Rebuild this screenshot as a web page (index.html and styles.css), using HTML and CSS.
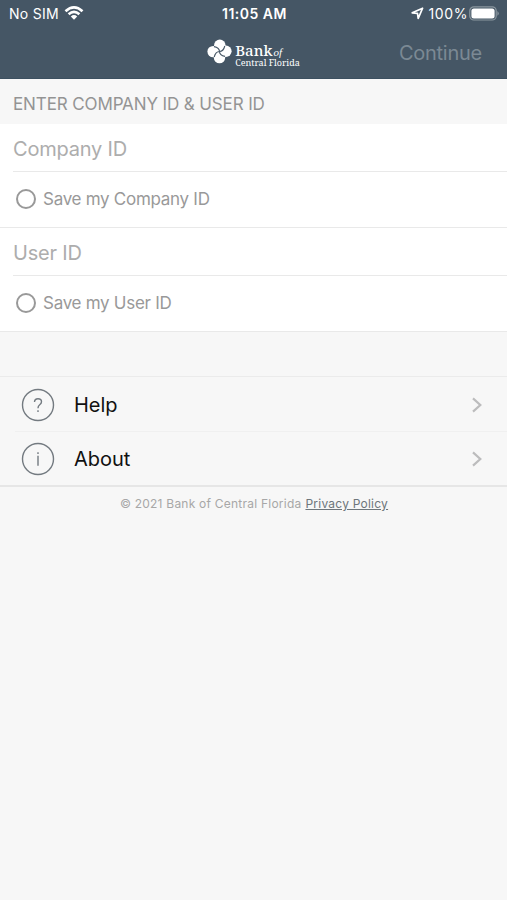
FILE: index.html
```html
<!DOCTYPE html>
<html lang="en">
<head>
<meta charset="utf-8">
<title>Bank of Central Florida</title>
<link rel="stylesheet" href="styles.css">
</head>
<body>
<header class="header">
  <div class="status">
    <div class="carrier"><span class="sim">No SIM</span>
      <svg class="wifi" width="20" height="16" viewBox="0 0 20 16" fill="none" stroke="#fff" stroke-width="2.6"><path d="M1.5 6.2Q10-1.6 18.5 6.2M4.6 9.3Q10 4.4 15.4 9.3"/><path d="M6.8 11.4Q10 8.8 13.2 11.4L10 14.8Z" fill="#fff" stroke="none"/></svg>
    </div>
    <div class="clock">11:05 AM</div>
    <div class="power">
      <svg width="13" height="13" viewBox="0 0 13 13" fill="none" stroke="#fff" stroke-width="1.7" stroke-linejoin="round"><path d="M11.6 1.2L1.2 5.8L6.5 6.4L7.2 11.5Z"/></svg>
      <span class="percent">100%</span>
      <svg width="31" height="15" viewBox="0 0 31 15"><rect x=".8" y=".8" width="26.4" height="13.2" rx="4" fill="none" stroke="#8b979f" stroke-width="1.2"/><rect x="2.4" y="2.4" width="23.2" height="10" rx="2.5" fill="#fff"/><path d="M28.4 5Q31.2 7.4 28.4 9.8Z" fill="#8b979f"/></svg>
    </div>
  </div>
  <div class="nav">
    <div class="brand">
      <svg width="25" height="26" viewBox="0 0 25 26"><g fill="#fff"><circle cx="12.8" cy="6.2" r="5.7"/><circle cx="6.1" cy="12.6" r="5.7"/><circle cx="18.9" cy="12.2" r="5.7"/><circle cx="12.5" cy="18.6" r="5.7"/><circle cx="12.5" cy="12.5" r="4"/></g><path d="M12.5 12.5Q12.4 8.6 7 7.6M12.5 12.5Q16.4 12.4 17.8 7M12.5 12.5Q12.6 16.4 18 17.4M12.5 12.5Q8.6 12.6 7.2 18" fill="none" stroke="#455665" stroke-width="1.1"/></svg>
      <div class="name"><div class="bank"><span class="bank-word">Bank</span><i class="of">of</i></div><div class="florida">Central Florida</div></div>
    </div>
    <div class="continue">Continue</div>
  </div>
</header>
<main>
  <h1 class="title"><span>ENTER COMPANY ID &amp; USER ID</span></h1>
  <section class="group">
    <div class="field"><span class="company">Company ID</span></div>
    <div class="save"><span class="radio"></span><span>Save my Company ID</span></div>
  </section>
  <section class="group">
    <div class="field"><span class="user">User ID</span></div>
    <div class="save"><span class="radio"></span><span>Save my User ID</span></div>
  </section>
  <nav class="links">
    <div class="link">
      <svg class="badge" width="34" height="34" viewBox="0 0 34 34" fill="none" stroke="#737a80" stroke-width="1.4"><circle cx="17" cy="17" r="15.5"/><path d="M13.5 14Q13.6 10.8 17 10.8Q20.5 10.8 20.5 13.8Q20.5 15.5 18.7 16.8Q17 18 17 20.3M17 22.2V24"/></svg>
      <span>Help</span>
      <svg class="chevron" width="12" height="16" viewBox="0 0 12 16" fill="none" stroke="#bcbcbd" stroke-width="2.2"><path d="M2 1.4L9.3 8L2 14.6"/></svg>
    </div>
    <div class="link about-row">
      <svg class="badge" width="34" height="34" viewBox="0 0 34 34" fill="none" stroke="#737a80" stroke-width="1.4"><circle cx="17" cy="17" r="15.5"/><path d="M17 13.8V23.8M17 10.2V12"/></svg>
      <span>About</span>
      <svg class="chevron" width="12" height="16" viewBox="0 0 12 16" fill="none" stroke="#bcbcbd" stroke-width="2.2"><path d="M2 1.4L9.3 8L2 14.6"/></svg>
    </div>
  </nav>
</main>
<footer class="footer"><span>© 2021 Bank of Central Florida</span> <a class="policy">Privacy Policy</a></footer>
</body>
</html>
```
FILE: styles.css
```css
* { box-sizing: border-box; }
body { margin: 0; min-height: 900px; background: #f7f7f7; font-family: Inter, "Liberation Sans", sans-serif; color: #999; }
svg { display: block; flex: none; }
span, .clock, .continue { white-space: nowrap; }
.header { height: 79px; background: #455665; color: #fff; border-bottom: 1px solid #3c5060; }
.status { height: 27px; display: grid; grid-template-columns: 1fr auto 1fr; align-items: center; font-size: 14px; line-height: 27px; padding: 0 7px 0 9px; }
.carrier { display: flex; align-items: center; gap: 5px; }
.sim { letter-spacing: .3px; }
.wifi { margin-top: -2px; }
.clock { font-weight: 600; letter-spacing: .5px; }
.power { display: flex; align-items: center; justify-content: flex-end; gap: 4px; }
.percent { letter-spacing: .6px; margin-right: -3px; }
.nav { height: 51px; display: grid; grid-template-columns: 1fr auto 1fr; align-items: center; }
.brand { grid-column: 2; display: flex; gap: 3px; align-items: flex-start; }
.name { font-family: "Noto Serif", "DejaVu Serif", serif; padding-top: 4px; }
.bank { display: flex; align-items: baseline; height: 15px; line-height: 14px; font-weight: 500; }
.bank-word { font-size: 15px; }
.of { font: italic 11px/10px "Liberation Serif", serif; margin-left: 1px; }
.florida { font-size: 9px; line-height: 9px; white-space: nowrap; }
.continue { justify-self: end; margin-right: 25px; font-size: 20px; letter-spacing: -.25px; color: #7b8994; }
.title { margin: 0; height: 45px; padding: 3px 13px 0; font-weight: 400; font-size: 17px; letter-spacing: -.12px; line-height: 45px; color: #949494; }
.group { height: 104px; background: #fff; border-bottom: 1px solid #e9e9e9; }
.field { height: 48px; margin-left: 13px; border-bottom: 1px solid #e9e9e9; font-size: 20px; letter-spacing: -.2px; line-height: 51px; color: #adadad; }
.save { height: 54px; display: flex; align-items: center; padding-left: 16px; gap: 7px; font-size: 17px; letter-spacing: -.28px; color: #999; }
.radio { width: 20px; height: 20px; border: 2px solid #999; border-radius: 50%; }
.links { margin-top: 44px; border-top: 1px solid #ebebeb; border-bottom: 2px solid #e6e6e6; }
.link { height: 55px; display: flex; align-items: center; padding: 0 24px 0 21px; font-size: 20px; color: #111; background: linear-gradient(#f0f0f0, #f0f0f0) 15px bottom / 100% 1px no-repeat; }
.about-row { background: none; height: 53px; padding-top: 1px; }
.badge { margin-right: 19px; }
.chevron { margin-left: auto; }
.footer { display: flex; justify-content: center; gap: 4px; padding: 8px 0 0 1px; font-size: 12px; letter-spacing: .23px; line-height: 18px; color: #a7a7a7; }
.policy { color: #6e767b; text-decoration: underline; white-space: nowrap; }
```
